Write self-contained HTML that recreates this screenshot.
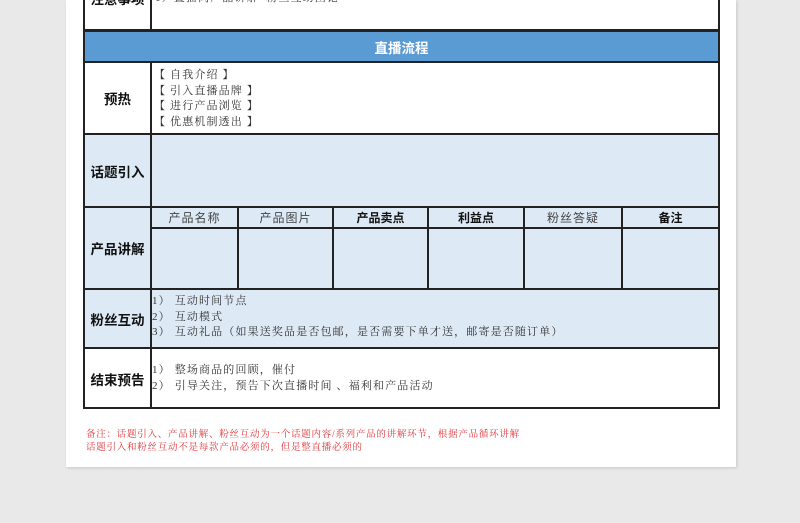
<!DOCTYPE html>
<html><head><meta charset="utf-8"><style>
body{margin:0;width:800px;height:523px;background:#e9e9e9;position:relative;overflow:hidden;font-family:"Liberation Sans","Noto Sans CJK SC",sans-serif;}
.page{position:absolute;left:66px;top:0;width:670px;height:467px;background:#fff;box-shadow:1px 1px 3px rgba(0,0,0,.15);}
.a{position:absolute;box-sizing:border-box;}
.b{border:1px solid #222;}
.lab{font-weight:bold;font-size:13.5px;color:#111;display:flex;align-items:center;justify-content:center;}
.t{font-family:"Liberation Serif","Noto Serif CJK SC",serif;font-size:11px;color:#333;line-height:15.5px;letter-spacing:1.15px;white-space:nowrap;}
.h{font-size:12px;color:#444;display:flex;align-items:center;justify-content:center;letter-spacing:1px;}
.lb{background:#ddeaf6;}
</style></head><body>
<div class="page"></div>
<div class="a b" style="left:83px;top:-2px;width:637px;height:33px;border-width:2px;"></div>
<div class="a" style="left:150px;top:0;width:2px;height:31px;background:#222"></div>
<div class="a t" style="left:155px;top:-9px;">1）直播间产品讲解+粉丝互动团论</div>
<div class="a lab" style="left:85px;top:-10px;width:65px;height:15px;">注意事项</div>
<div class="a" style="left:83px;top:30px;width:637px;height:33px;background:#5b9bd3;border:2px solid #222;color:#fff;font-weight:bold;font-size:13.5px;display:flex;align-items:center;justify-content:center;">直播流程</div>
<div class="a" style="left:83px;top:61px;width:637px;height:348px;border:2px solid #222;border-top:none;"></div>
<div class="a lb" style="left:85px;top:135px;width:633px;height:154px;"></div>
<div class="a lb" style="left:85px;top:290px;width:633px;height:58px;"></div>
<div class="a" style="left:83px;top:133px;width:637px;height:2px;background:#222"></div>
<div class="a" style="left:83px;top:206px;width:637px;height:2px;background:#222"></div>
<div class="a" style="left:150px;top:227px;width:570px;height:2px;background:#222"></div>
<div class="a" style="left:83px;top:288px;width:637px;height:2px;background:#222"></div>
<div class="a" style="left:83px;top:347px;width:637px;height:2px;background:#222"></div>
<div class="a" style="left:150px;top:61px;width:2px;height:347px;background:#222"></div>
<div class="a" style="left:237px;top:207px;width:2px;height:82px;background:#222"></div>
<div class="a" style="left:332px;top:207px;width:2px;height:82px;background:#222"></div>
<div class="a" style="left:427px;top:207px;width:2px;height:82px;background:#222"></div>
<div class="a" style="left:523px;top:207px;width:2px;height:82px;background:#222"></div>
<div class="a" style="left:621px;top:207px;width:2px;height:82px;background:#222"></div>
<div class="a lab" style="left:85px;top:63px;width:65px;height:70px;">预热</div>
<div class="a lab" style="left:85px;top:135px;width:65px;height:71px;">话题引入</div>
<div class="a lab" style="left:85px;top:208px;width:65px;height:80px;">产品讲解</div>
<div class="a lab" style="left:85px;top:290px;width:65px;height:57px;">粉丝互动</div>
<div class="a lab" style="left:85px;top:349px;width:65px;height:59px;">结束预告</div>
<div class="a h" style="left:152px;top:208px;width:85px;height:19px;">产品名称</div>
<div class="a h" style="left:239px;top:208px;width:93px;height:19px;">产品图片</div>
<div class="a h" style="left:334px;top:208px;width:93px;height:19px;font-weight:bold;color:#111;letter-spacing:0">产品卖点</div>
<div class="a h" style="left:429px;top:208px;width:94px;height:19px;font-weight:bold;color:#111;letter-spacing:0">利益点</div>
<div class="a h" style="left:525px;top:208px;width:96px;height:19px;">粉丝答疑</div>
<div class="a h" style="left:623px;top:208px;width:95px;height:19px;font-weight:bold;color:#111;letter-spacing:0">备注</div>
<div class="a t" style="left:154px;top:68px;">【 自我介绍 】<br>【 引入直播品牌 】<br>【 进行产品浏览 】<br>【 优惠机制透出 】</div>
<div class="a t" style="left:152px;top:294px;">1） 互动时间节点<br>2） 互动模式<br>3） 互动礼品（如果送奖品是否包邮，是否需要下单才送，邮寄是否随订单）</div>
<div class="a t" style="left:152px;top:362px;line-height:16px;">1） 整场商品的回顾，催付<br>2） 引导关注，预告下次直播时间 、福利和产品活动</div>
<div class="a t" style="left:86px;top:429px;color:#e0353a;font-size:9.5px;line-height:13px;letter-spacing:0.75px;">备注：话题引入、产品讲解、粉丝互动为一个话题内容/系列产品的讲解环节，根据产品循环讲解<br>话题引入和粉丝互动不是每款产品必须的，但是整直播必须的</div>
</body></html>
